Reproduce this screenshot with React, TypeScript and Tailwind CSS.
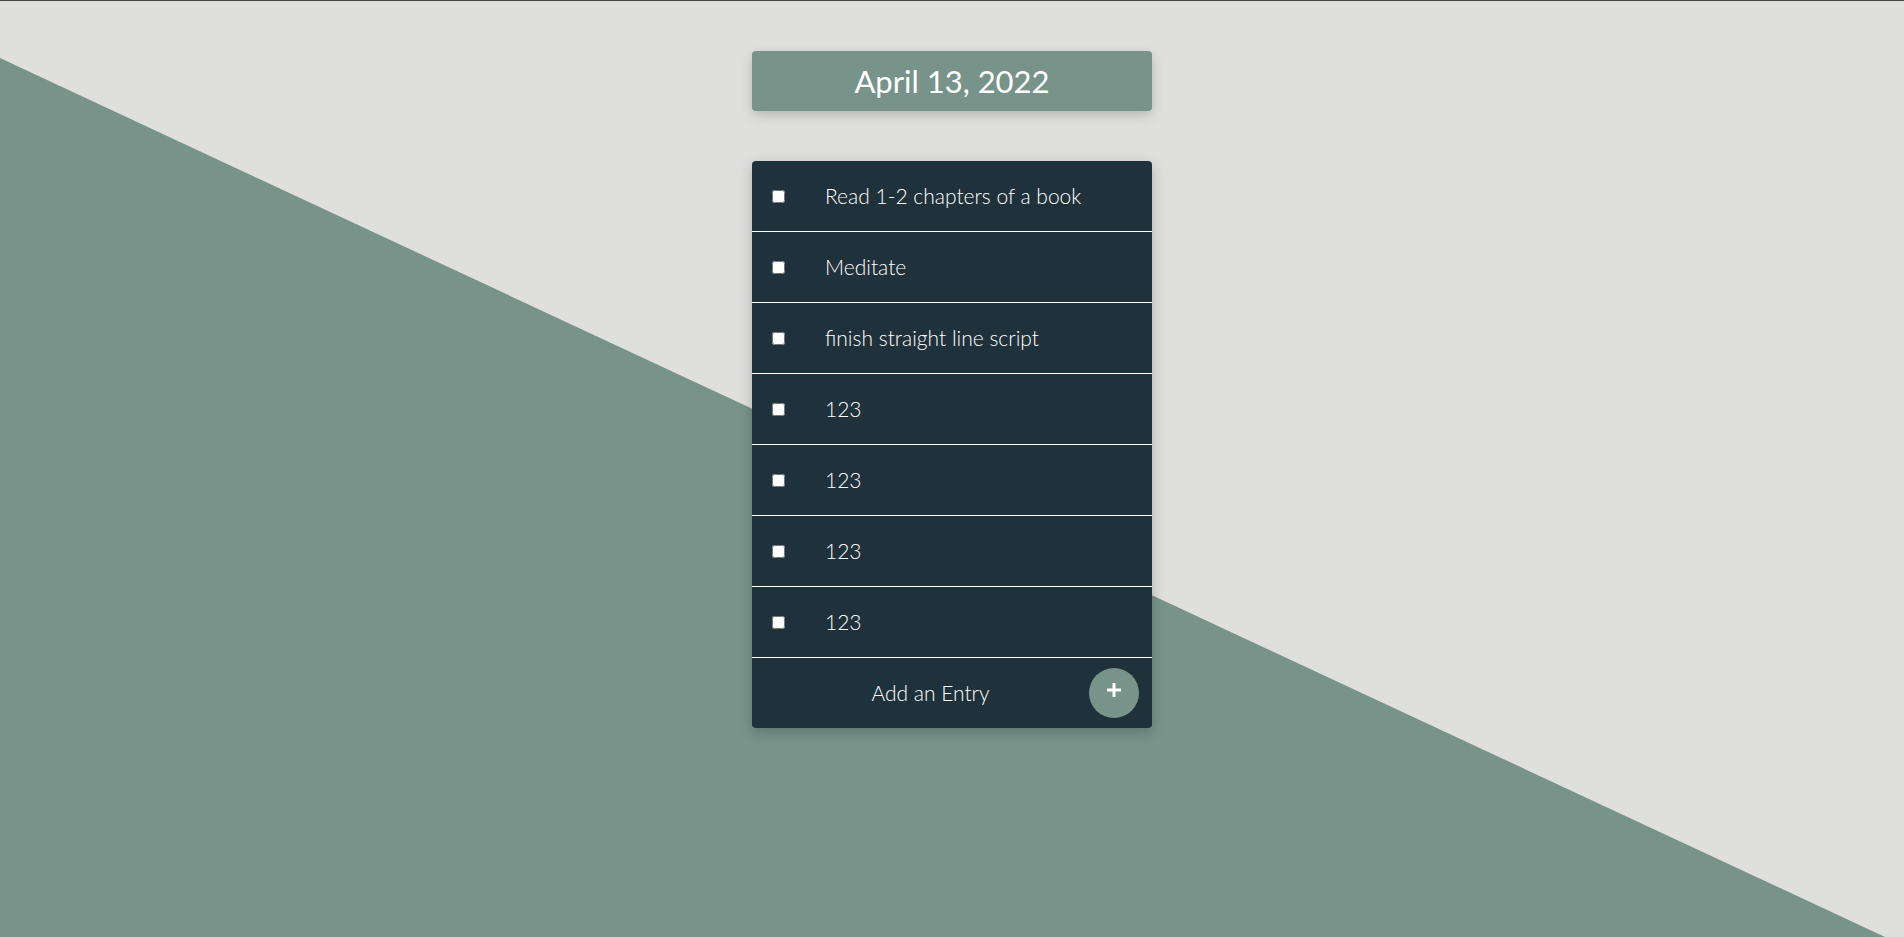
import React, { useState } from "react";

type Entry = { id: number; text: string; done: boolean };

const initialEntries: Entry[] = [
  { id: 1, text: "Read 1-2 chapters of a book", done: false },
  { id: 2, text: "Meditate", done: false },
  { id: 3, text: "finish straight line script", done: false },
  { id: 4, text: "123", done: false },
  { id: 5, text: "123", done: false },
  { id: 6, text: "123", done: false },
  { id: 7, text: "123", done: false },
];

const App: React.FC = () => {
  const [entries, setEntries] = useState<Entry[]>(initialEntries);

  const toggle = (id: number) => {
    setEntries((prev) => prev.map((e) => (e.id === id ? { ...e, done: !e.done } : e)));
  };

  return (
    <div className="relative min-h-screen overflow-hidden border-t border-[#444] bg-[#dfdfdd] font-['Lato',sans-serif]">
      {/* Diagonal backdrop */}
      <svg
        className="absolute inset-0 h-full w-full"
        viewBox="0 0 1904 936"
        preserveAspectRatio="none"
      >
        <polygon points="0,57 1885,936 0,936" fill="#78948a" />
      </svg>

      <div className="relative flex flex-col items-center pt-[50px]">
        {/* Date header */}
        <div className="flex h-[60px] w-[400px] items-center justify-center rounded-[4px] bg-[#78948a] shadow-[0_4px_12px_rgba(0,0,0,0.18)]">
          <h1 className="text-[31px] leading-none text-white">April 13, 2022</h1>
        </div>

        {/* Entries card */}
        <div className="mt-[50px] w-[400px] overflow-hidden rounded-[4px] bg-[#1f313a] shadow-[0_4px_14px_rgba(0,0,0,0.22)]">
          {entries.map((entry) => (
            <label
              key={entry.id}
              className="flex h-[71px] cursor-pointer items-center border-b border-white pl-5"
            >
              <input
                type="checkbox"
                checked={entry.done}
                onChange={() => toggle(entry.id)}
                className="m-0 h-[13px] w-[13px]"
              />
              <span className="ml-[40px] text-[21px] font-light text-white">{entry.text}</span>
            </label>
          ))}

          {/* Add entry footer */}
          <div className="flex h-[70px] items-center pr-[13px] pl-[20px]">
            <span className="flex-1 text-center text-[21px] font-light text-white">Add an Entry</span>
            <button className="flex h-[50px] w-[50px] items-center justify-center rounded-full bg-[#78948a] text-white">
              <svg viewBox="0 0 16 16" className="-mt-[6px] h-[16px] w-[16px]">
                <path d="M8 1v14M1 8h14" stroke="currentColor" strokeWidth={3} />
              </svg>
            </button>
          </div>
        </div>
      </div>
    </div>
  );
};

export default App;
